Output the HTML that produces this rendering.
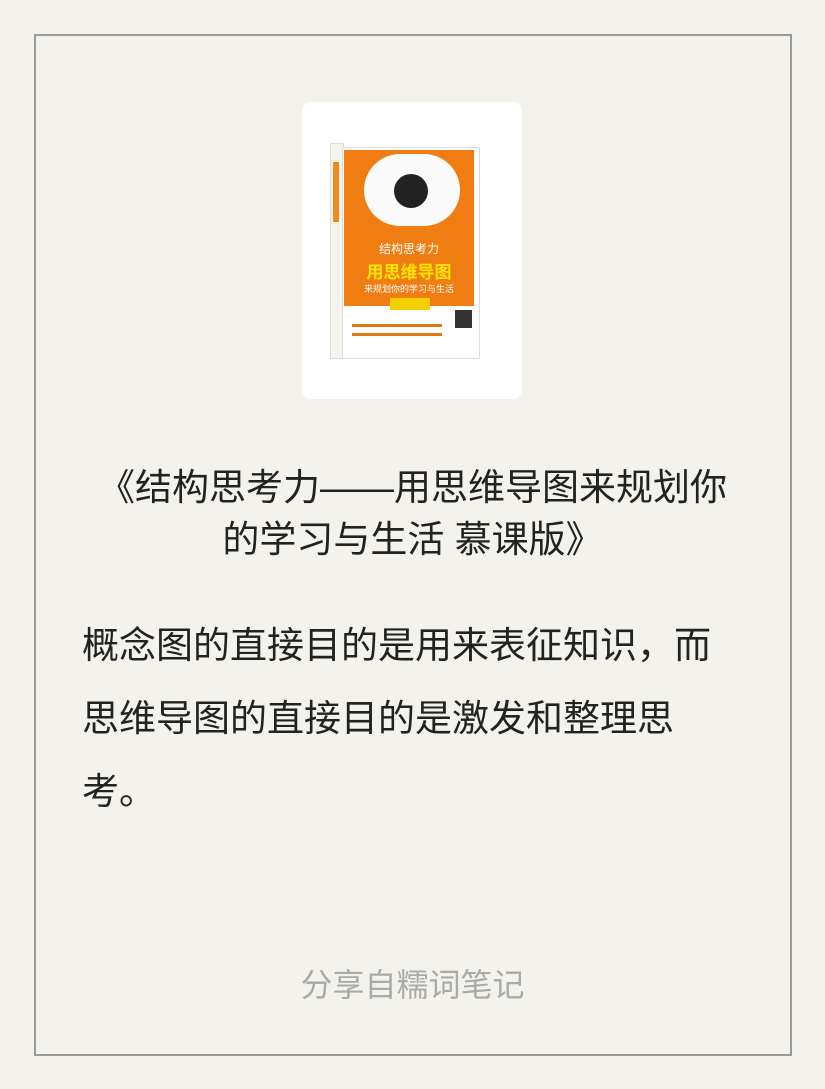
<!DOCTYPE html>
<html><head><meta charset="utf-8"><style>
body{margin:0;width:825px;height:1089px;background:#f3f2ec;position:relative;overflow:hidden;font-family:"Liberation Sans","Noto Sans CJK SC",sans-serif}
.frame{position:absolute;left:34px;top:34px;width:754px;height:1018px;border:2px solid #9a9a9a}
.card{position:absolute;left:302px;top:102px;width:220px;height:297px;background:#fff;border-radius:10px}
.t{position:absolute;left:0;width:825px;text-align:center;font-size:37px;color:#222;line-height:52px;white-space:nowrap}
.b{position:absolute;left:82px;font-size:37px;color:#222;line-height:73px;width:700px;white-space:nowrap}
.f{position:absolute;left:0;width:825px;text-align:center;top:960px;font-size:32px;color:#aaa}
</style></head><body>
<div class="frame"></div>
<div class="card">
<div style="position:absolute;left:28px;top:41px;width:12px;height:214px;background:#f6f4ee;border:1px solid #ddd"></div>
<div style="position:absolute;left:31px;top:60px;width:6px;height:60px;background:#f08a1c"></div>
<div style="position:absolute;left:40px;top:45px;width:136px;height:210px;background:#fff;border:1px solid #ddd"></div>
<div style="position:absolute;left:42px;top:48px;width:130px;height:156px;background:#f07d12"></div>
<div style="position:absolute;left:62px;top:52px;width:96px;height:72px;background:#fafafa;border-radius:40px"></div>
<div style="position:absolute;left:92px;top:72px;width:34px;height:34px;background:#222;border-radius:50%"></div>
<div style="position:absolute;left:42px;top:138px;width:130px;text-align:center;font-size:12px;color:#fff">结构思考力</div>
<div style="position:absolute;left:42px;top:156px;width:130px;text-align:center;font-size:17px;font-weight:bold;color:#ffe600">用思维导图</div>
<div style="position:absolute;left:42px;top:180px;width:130px;text-align:center;font-size:9px;color:#fff">来规划你的学习与生活</div>
<div style="position:absolute;left:88px;top:196px;width:40px;height:12px;background:#f5d000"></div>
<div style="position:absolute;left:153px;top:208px;width:17px;height:18px;background:#333"></div>
<div style="position:absolute;left:50px;top:222px;width:90px;height:3px;background:#e07a10"></div>
<div style="position:absolute;left:50px;top:231px;width:90px;height:3px;background:#e07a10"></div>
</div>
<div class="t" style="top:462px">《结构思考力——用思维导图来规划你</div>
<div class="t" style="top:514px">的学习与生活 慕课版》</div>
<div class="b" style="top:609px">概念图的直接目的是用来表征知识，而</div>
<div class="b" style="top:682px">思维导图的直接目的是激发和整理思</div>
<div class="b" style="top:755px">考。</div>
<div class="f">分享自糯词笔记</div>
</body></html>
